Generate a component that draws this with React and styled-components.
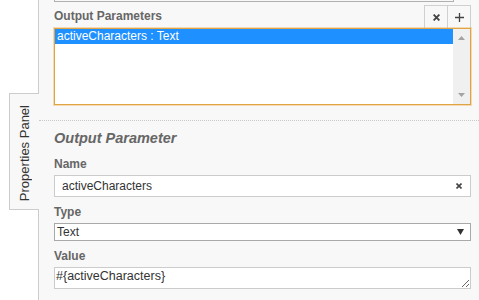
import styled, { createGlobalStyle } from 'styled-components';

const Global = createGlobalStyle`
  html, body {
    margin: 0;
    padding: 0;
    background: #ffffff;
    overflow: hidden;
  }
  body {
    font-family: 'Liberation Sans', Arial, sans-serif;
  }
`;

const Page = styled.div`
  display: flex;
  width: 479px;
  height: 300px;
  overflow: hidden;
`;

const Gutter = styled.div`
  flex: 0 0 38px;
  display: flex;
  flex-direction: column;
  align-items: flex-start;
  padding: 93px 0 0 9px;
  box-sizing: border-box;
  border-right: 1px solid #cccccc;
  background: #ffffff;
`;

const Tab = styled.div`
  width: 30px;
  height: 117px;
  margin-right: -1px;
  box-sizing: border-box;
  display: flex;
  align-items: center;
  justify-content: center;
  background: #f8f8f8;
  border: 1px solid #cccccc;
  border-right: none;
`;

const TabLabel = styled.span`
  writing-mode: vertical-rl;
  transform: rotate(180deg);
  font-size: 13px;
  line-height: 15px;
  color: #333333;
  white-space: nowrap;
  margin-top: 3px;
`;

const Panel = styled.div`
  flex: 1;
  display: flex;
  flex-direction: column;
  background: #f8f8f8;
  min-width: 0;
`;

const Group = styled.section`
  display: flex;
  flex-direction: column;
  padding: ${p => p.$pad};
  border-bottom: ${p => (p.$divider ? '1px dotted #c8c8c8' : 'none')};
`;

const TopBox = styled.div`
  height: 1px;
  margin-right: 17px;
  border: 1px solid #b0b0b0;
  border-top: none;
`;

const HeaderRow = styled.div`
  display: flex;
  align-items: flex-end;
  justify-content: space-between;
  height: 26px;
`;

const Label = styled.div`
  font-size: 12px;
  line-height: 14px;
  font-weight: bold;
  color: #666666;
  margin-bottom: ${p => p.$mb || 0}px;
`;

const ButtonBar = styled.div`
  display: flex;
  border-left: 1px solid #d0d0d0;
`;

const IconButton = styled.div`
  width: 22px;
  height: 22px;
  display: flex;
  align-items: center;
  justify-content: center;
  border-top: 1px solid #d0d0d0;
  border-right: 1px solid #d0d0d0;
  color: #444444;
`;

const List = styled.div`
  display: flex;
  height: 77px;
  box-sizing: border-box;
  background: #ffffff;
  border: 1px solid #dea445;
  box-shadow: 0 0 0 1px rgba(240, 180, 90, 0.45);
`;

const ListItems = styled.div`
  flex: 1;
  display: flex;
  flex-direction: column;
`;

const ListItem = styled.div`
  height: 15px;
  line-height: 15px;
  padding-left: 2px;
  font-size: 12px;
  color: ${p => (p.$selected ? '#ffffff' : '#333333')};
  background: ${p => (p.$selected ? '#1e90ff' : 'transparent')};
`;

const Scrollbar = styled.div`
  width: 17px;
  display: flex;
  flex-direction: column;
  justify-content: space-between;
  align-items: center;
  padding: 7px 0 7px;
  background: #f0f0f0;
`;

const Title = styled.div`
  font-size: 14.5px;
  line-height: 16px;
  font-weight: bold;
  font-style: italic;
  color: #666666;
  margin-bottom: 11px;
`;

const Fields = styled.div`
  display: flex;
  flex-direction: column;
  gap: 8px;
`;

const Field = styled.div`
  display: flex;
  flex-direction: column;
`;

const InputWrap = styled.div`
  position: relative;
`;

const TextInput = styled.input`
  display: block;
  width: 100%;
  height: 22px;
  box-sizing: border-box;
  margin: 0;
  padding: 0 22px 0 7px;
  border: 1px solid #cccccc;
  border-radius: 0;
  background: #ffffff;
  font-family: 'Liberation Sans', Arial, sans-serif;
  font-size: 12px;
  color: #333333;
  outline: none;
`;

const ClearButton = styled.span`
  position: absolute;
  right: 9px;
  top: 8px;
  display: flex;
  line-height: 0;
`;

const SelectBox = styled.div`
  display: flex;
  align-items: center;
  justify-content: space-between;
  height: 18px;
  box-sizing: border-box;
  padding: 0 6px 0 2px;
  border: 1px solid #a9a9a9;
  background: #ffffff;
  font-size: 12px;
  line-height: 14px;
  color: #333333;
`;

const TextArea = styled.textarea`
  display: block;
  width: 100%;
  height: 22px;
  box-sizing: border-box;
  margin: 0;
  padding: 1px 1px;
  border: 1px solid #cccccc;
  border-radius: 0;
  background: #ffffff;
  font-family: 'Liberation Sans', Arial, sans-serif;
  font-size: 12.5px;
  line-height: 14px;
  color: #333333;
  outline: none;
  overflow: hidden;
`;

const Cross = ({ size = 6, color = '#444' }) => (
  <svg width={size} height={size} viewBox="0 0 6 6">
    <path d="M0.5 0.5 L5.5 5.5 M5.5 0.5 L0.5 5.5" stroke={color} strokeWidth="1.6" />
  </svg>
);

const Plus = () => (
  <svg width="9" height="9" viewBox="0 0 9 9">
    <path d="M4.5 0 V9 M0 4.5 H9" stroke="#444" strokeWidth="1.3" />
  </svg>
);

const Arrow = ({ up, color = '#a3a3a3', w = 7, h = 4 }) => (
  <svg width={w} height={h} viewBox={`0 0 ${w} ${h}`}>
    <path d={up ? `M0 ${h} L${w / 2} 0 L${w} ${h} Z` : `M0 0 L${w / 2} ${h} L${w} 0 Z`} fill={color} />
  </svg>
);

export default function App() {
  return (
    <Page>
      <Global />
      <Gutter>
        <Tab>
          <TabLabel>Properties Panel</TabLabel>
        </Tab>
      </Gutter>
      <Panel>
        <Group $pad="0 8px 15px 15px" $divider>
          <TopBox />
          <HeaderRow>
            <Label $mb={5}>Output Parameters</Label>
            <ButtonBar>
              <IconButton><Cross size={7} /></IconButton>
              <IconButton><Plus /></IconButton>
            </ButtonBar>
          </HeaderRow>
          <List>
            <ListItems>
              <ListItem $selected>activeCharacters : Text</ListItem>
            </ListItems>
            <Scrollbar>
              <Arrow up />
              <Arrow />
            </Scrollbar>
          </List>
        </Group>
        <Group $pad="9px 8px 0 15px">
          <Title>Output Parameter</Title>
          <Fields>
            <Field>
              <Label $mb={4}>Name</Label>
              <InputWrap>
                <TextInput readOnly value="activeCharacters" />
                <ClearButton><Cross size={6} /></ClearButton>
              </InputWrap>
            </Field>
            <Field>
              <Label $mb={4}>Type</Label>
              <SelectBox>
                <span>Text</span>
                <Arrow color="#333" w={7} h={6} />
              </SelectBox>
            </Field>
            <Field>
              <Label $mb={4}>Value</Label>
              <TextArea readOnly value="#{activeCharacters}" />
            </Field>
          </Fields>
        </Group>
      </Panel>
    </Page>
  );
}
